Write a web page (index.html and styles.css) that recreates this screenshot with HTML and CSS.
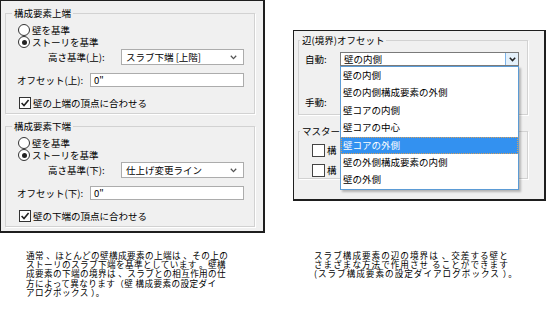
FILE: index.html
```html
<!DOCTYPE html>
<html lang="ja">
<head>
  <meta charset="UTF-8" />
  <meta name="viewport" content="width=device-width, initial-scale=1.0"/>
  <title>構成要素の上端と下端</title>
  <link rel="stylesheet" href="styles.css">
</head>
<body>
  <div class="page">
    <div class="figures">
      <div class="dialog wall-dialog">
        <fieldset class="group">
          <legend>構成要素上端</legend>
          <div class="choice first"><span class="radio"></span>壁を基準</div>
          <div class="choice"><span class="radio checked"></span>ストーリを基準</div>
          <div class="field field-height">
            <span class="field-label">高さ基準(上):</span>
            <div class="combo">スラブ下端 [上階]
              <svg class="chevron" width="7" height="5" viewBox="0 0 7 5"><path d="M0.8 0.8 L3.5 3.6 L6.2 0.8" fill="none" stroke="#555" stroke-width="1.3"/></svg>
            </div>
          </div>
          <div class="field field-offset">
            <span class="field-label">オフセット(上):</span>
            <div class="textbox">0"</div>
          </div>
          <div class="choice check-row">
            <span class="check"><svg width="10" height="10" viewBox="0 0 10 10"><path d="M1.6 5 L4 7.5 L8.6 2" fill="none" stroke="#222" stroke-width="1.6"/></svg></span>壁の上端の頂点に合わせる
          </div>
        </fieldset>

        <fieldset class="group group-bottom">
          <legend>構成要素下端</legend>
          <div class="choice first"><span class="radio"></span>壁を基準</div>
          <div class="choice"><span class="radio checked"></span>ストーリを基準</div>
          <div class="field field-height">
            <span class="field-label">高さ基準(下):</span>
            <div class="combo">仕上げ変更ライン
              <svg class="chevron" width="7" height="5" viewBox="0 0 7 5"><path d="M0.8 0.8 L3.5 3.6 L6.2 0.8" fill="none" stroke="#555" stroke-width="1.3"/></svg>
            </div>
          </div>
          <div class="field field-offset">
            <span class="field-label">オフセット(下):</span>
            <div class="textbox">0"</div>
          </div>
          <div class="choice check-row">
            <span class="check"><svg width="10" height="10" viewBox="0 0 10 10"><path d="M1.6 5 L4 7.5 L8.6 2" fill="none" stroke="#222" stroke-width="1.6"/></svg></span>壁の下端の頂点に合わせる
          </div>
        </fieldset>
      </div>

      <div class="dialog slab-dialog">
        <fieldset class="group edge-group">
          <legend>辺(境界)オフセット</legend>
          <div class="field field-auto">
            <span class="field-label">自動:</span>
            <div class="combo combo-open">壁の内側
              <span class="combo-button">
                <svg width="7" height="5" viewBox="0 0 7 5"><path d="M0.8 0.8 L3.5 3.6 L6.2 0.8" fill="none" stroke="#222" stroke-width="1.5"/></svg>
              </span>
            </div>
          </div>
          <div class="field field-manual">
            <span class="field-label">手動:</span>
          </div>
        </fieldset>

        <fieldset class="group master-group">
          <legend>マスター</legend>
          <div class="choice first"><span class="check"></span>構</div>
          <div class="choice"><span class="check"></span>構</div>
        </fieldset>

        <ul class="dropdown">
          <li>壁の内側</li>
          <li>壁の内側構成要素の外側</li>
          <li>壁コアの内側</li>
          <li>壁コアの中心</li>
          <li class="selected">壁コアの外側</li>
          <li>壁の外側構成要素の内側</li>
          <li>壁の外側</li>
        </ul>
      </div>
    </div>

    <div class="captions">
      <p class="caption caption-wall">通常 、ほとんどの壁構成要素の上端は 、その上の<br>ストーリのスラブ下端を基準としています 。壁構<br>成要素の下端の境界は 、スラブとの相互作用の仕<br>方によって異なります（壁 構成要素の設定ダイ<br>アログボックス ）。</p>
      <p class="caption caption-slab">スラブ構成要素の辺の境界は 、交差する壁と<br>さまざまな方法で作用させ ることができます<br>(スラブ構成要素の設定ダイアログボックス ）。</p>
    </div>
  </div>
</body>
</html>
```

FILE: styles.css
```css
* {
  box-sizing: border-box;
}

body {
  margin: 0;
  background: #fff;
  color: #000;
  font-family: "Noto Sans CJK JP", "Noto Sans", sans-serif;
}

.figures {
  display: flex;
  align-items: flex-start;
}

.dialog {
  background: #f0f0f0;
  border: 1px solid #1e1e1e;
  border-right-width: 2px;
  border-bottom-width: 2px;
  font-size: 9.5px;
}

.wall-dialog {
  width: 265px;
  padding: 6px 0 4px 4px;
}

.slab-dialog {
  position: relative;
  width: 253px;
  margin: 30px 0 0 28px;
  padding: 3px 0 20px 4px;
}

/* group boxes */
.group {
  margin: 0;
  width: 250px;
  min-width: 0;
  padding: 0 10px 4px 12px;
  border: 1px solid #d2d2d2;
  box-shadow: 1px 1px 0 #fff;
}

.group legend {
  margin-left: -6px;
  padding: 0 2px;
  height: 12px;
  line-height: 12px;
  font-size: 9.5px;
}

.group-bottom {
  margin-top: 6px;
}

.choice {
  display: flex;
  align-items: center;
  gap: 2px;
  height: 12px;
  line-height: 12px;
  white-space: nowrap;
}

.choice.first {
  margin-top: 5px;
}

.radio {
  position: relative;
  width: 12px;
  height: 12px;
  border: 1px solid #333;
  border-radius: 50%;
  background: #fff;
  flex-shrink: 0;
}

.radio.checked::after {
  content: "";
  position: absolute;
  left: 2.5px;
  top: 2.5px;
  width: 5px;
  height: 5px;
  border-radius: 50%;
  background: #222;
}

.check {
  display: flex;
  align-items: center;
  justify-content: center;
  width: 12px;
  height: 12px;
  border: 1px solid #333;
  background: #fff;
  flex-shrink: 0;
}

.check-row {
  margin-top: 10px;
  margin-left: 1px;
}

.field {
  display: flex;
  align-items: center;
  white-space: nowrap;
}

.field-height {
  margin-top: 1px;
  height: 16px;
  padding-left: 30px;
}

.field-offset {
  margin-top: 8px;
  height: 14px;
  margin-left: -1px;
}

.combo {
  display: flex;
  align-items: center;
  justify-content: space-between;
  margin-left: auto;
  width: 123px;
  height: 16px;
  padding: 0 6px 0 4px;
  background: #fff;
  border: 1px solid #acacac;
}

.textbox {
  margin-left: auto;
  width: 154px;
  height: 14px;
  line-height: 12px;
  padding-left: 3px;
  background: #fff;
  border: 1px solid #acacac;
}

/* slab dialog */
.edge-group,
.master-group {
  width: 230px;
  padding: 0 8px 5px 6px;
}

.edge-group legend,
.master-group legend {
  margin-left: -5px;
}

.field-auto {
  margin-top: 6px;
  height: 14px;
}

.combo-open {
  width: 179px;
  height: 14px;
  padding: 0 0 0 3px;
  border-color: #7a7a7a;
}

.combo-button {
  display: flex;
  align-items: center;
  justify-content: center;
  width: 13px;
  height: 12px;
  background: #e5f1fb;
  border-left: 1px solid #7eb4ea;
}

.field-manual {
  margin-top: 29px;
  height: 14px;
}

.master-group {
  margin-top: 10px;
  padding-bottom: 2px;
}

.master-group .choice {
  margin-left: 7px;
}

.master-group .choice.first {
  margin-top: 7px;
}

.master-group .choice + .choice {
  margin-top: 8px;
}

.master-group .check {
  width: 13px;
  height: 13px;
  border-color: #444;
}

.dropdown {
  position: absolute;
  left: 46px;
  top: 35px;
  width: 179px;
  height: 124px;
  margin: 0;
  padding: 0;
  list-style: none;
  background: #fff;
  border: 1px solid #5b9bd5;
  box-shadow: 2px 2px 2px rgba(0, 0, 0, 0.25);
}

.dropdown li {
  height: 17.4px;
  line-height: 17px;
  padding-left: 2px;
  white-space: nowrap;
}

.dropdown li.selected {
  background: #3391f0;
  color: #fff;
  outline: 1px dotted #d7a05a;
  outline-offset: -1px;
}

/* captions */
.captions {
  display: flex;
  margin-top: 18px;
}

.caption {
  margin: 0;
  font-size: 8.6px;
  line-height: 9.2px;
  white-space: nowrap;
  color: #000;
}

.caption-wall {
  margin-left: 26px;
  width: 240px;
  letter-spacing: 0.4px;
}

.caption-slab {
  margin-left: 48px;
  letter-spacing: 1px;
}
```
